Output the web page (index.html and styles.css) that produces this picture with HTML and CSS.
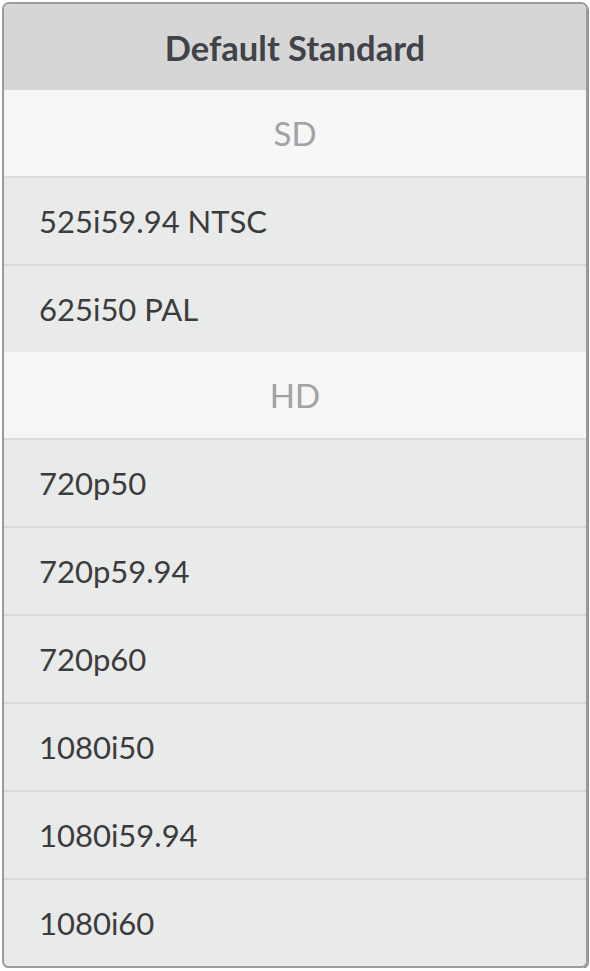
FILE: index.html
```html
<!DOCTYPE html>
<html lang="en">
<head>
    <meta charset="UTF-8">
    <meta name="viewport" content="width=device-width, initial-scale=1.0">
    <title>Default Standard</title>
    <link rel="stylesheet" href="styles.css">
</head>
<body>
    <div class="menu">
        <div class="menu-head">Default Standard</div>
        <div class="group">SD</div>
        <div class="item">525i59.94 NTSC</div>
        <div class="item">625i50 PAL</div>
        <div class="group">HD</div>
        <div class="item">720p50</div>
        <div class="item">720p59.94</div>
        <div class="item">720p60</div>
        <div class="item">1080i50</div>
        <div class="item">1080i59.94</div>
        <div class="item">1080i60</div>
    </div>
</body>
</html>
```

FILE: styles.css
```css
:root {
    --frame: #9c9c9c;
    --head: #d6d6d6;
    --group: #f6f6f6;
    --row: #e9eaea;
    --line: #d9d9d9;
}
* {
    margin: 0;
    padding: 0;
    box-sizing: border-box;
}

body {
    background-color: #ffffff;
    font-family: Lato, "Open Sans", sans-serif;
}

.menu {
    display: flex;
    flex-direction: column;
    width: 586px;
    height: 966px;
    margin: 2px 0 0 2px;
    border: 2px solid var(--frame);
    border-radius: 7px;
    box-shadow: 1px 1px 0 #8c8c8c;
    overflow: hidden;
}

.menu-head,
.group,
.item {
    flex: 1;
    display: flex;
    align-items: center;
}

.menu-head {
    justify-content: center;
    background-color: var(--head);
    color: #404349;
    font-size: 34.5px;
    font-weight: bold;
}

.group {
    justify-content: center;
    background-color: var(--group);
    color: #a2a2a2;
    font-size: 33px;
}

.item {
    padding-left: 35px;
    background-color: var(--row);
    color: #3c3c3c;
    font-size: 31px;
    border-top: 2px solid var(--line);
}

.group + .item {
    border-top-color: #dcdcdc;
}
```
